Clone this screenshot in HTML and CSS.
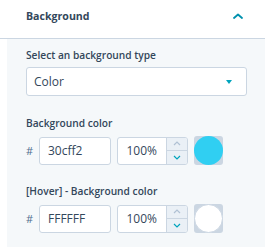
FILE: index.html
```html
<!DOCTYPE html>
<html lang="en">
<head>
    <meta charset="UTF-8">
    <meta name="viewport" content="width=device-width, initial-scale=1.0">
    <title>Background settings</title>
    <link rel="stylesheet" href="styles.css">
</head>
<body>
<div class="header">
    <span class="title">Background</span>
    <svg class="toggle" width="10" height="6" viewBox="0 0 10 6"><path d="M1 5 L5 1.5 L9 5" fill="none" stroke="#0091ae" stroke-width="1.8" stroke-linecap="round" stroke-linejoin="round"/></svg>
</div>
<div class="panel">
    <div class="field">
        <label>Select an background type</label>
        <div class="select">
            <span>Color</span>
            <span class="caret"></span>
        </div>
    </div>

    <div class="field">
        <label>Background color</label>
        <div class="color-row">
            <span class="hash">#</span>
            <input class="hex" type="text" value="30cff2" readonly>
            <div class="opacity">
                <input type="text" value="100%" readonly>
                <div class="stepper">
                    <span class="step"><svg width="8" height="5" viewBox="0 0 8 5"><path d="M1 4 L4 1 L7 4" fill="none" stroke="#b0c1d4" stroke-width="1.2"/></svg></span>
                    <span class="step"><svg width="8" height="5" viewBox="0 0 8 5"><path d="M1 1 L4 4 L7 1" fill="none" stroke="#00a4bd" stroke-width="1.2"/></svg></span>
                </div>
            </div>
            <div class="swatch"><span class="dot" style="background: #30cff2;"></span></div>
        </div>
    </div>

    <div class="field">
        <label>[Hover] - Background color</label>
        <div class="color-row">
            <span class="hash">#</span>
            <input class="hex" type="text" value="FFFFFF" readonly>
            <div class="opacity">
                <input type="text" value="100%" readonly>
                <div class="stepper">
                    <span class="step"><svg width="8" height="5" viewBox="0 0 8 5"><path d="M1 4 L4 1 L7 4" fill="none" stroke="#b0c1d4" stroke-width="1.2"/></svg></span>
                    <span class="step"><svg width="8" height="5" viewBox="0 0 8 5"><path d="M1 1 L4 4 L7 1" fill="none" stroke="#00a4bd" stroke-width="1.2"/></svg></span>
                </div>
            </div>
            <div class="swatch"><span class="dot white" style="background: #ffffff;"></span></div>
        </div>
    </div>
</div>
</body>
</html>
```

FILE: styles.css
```css
body {
    margin: 0;
    font-family: "Open Sans", "Lato", sans-serif;
    color: #33475b;
    background: #ffffff;
}
.header {
    height: 32px;
    display: flex;
    align-items: center;
    justify-content: space-between;
    padding: 0 22px 6px 26px;
    border-bottom: 1px solid #cbd6e2;
}
.title {
    font-size: 10.6px;
    font-weight: 700;
}
.toggle {
    display: block;
}
.panel {
    margin-left: 7px;
    margin-bottom: 1px;
    background: #f5f8fa;
    padding: 8px 18px 15px 19px;
}
.field {
    margin-bottom: 18px;
}
.field:first-child {
    margin-bottom: 19px;
}
.field:last-child {
    margin-bottom: 0;
}
label {
    display: block;
    font-size: 10.2px;
    font-weight: 600;
    line-height: 16px;
    margin-bottom: 4px;
}
.select {
    height: 27px;
    background: #ffffff;
    border: 1px solid #cbd6e2;
    border-radius: 3px;
    display: flex;
    align-items: center;
    justify-content: space-between;
    padding: 0 14px 0 7px;
    font-size: 12px;
}
.caret {
    width: 0;
    height: 0;
    border-left: 3px solid transparent;
    border-right: 3px solid transparent;
    border-top: 4px solid #00a4bd;
}
.color-row {
    display: flex;
    align-items: center;
    margin-top: 5px;
}
.hash {
    width: 13px;
    font-size: 11px;
    color: #516f90;
}
input {
    font-family: inherit;
    font-size: 12px;
    color: #33475b;
    border: none;
    outline: none;
    background: transparent;
    padding: 0;
}
.hex {
    box-sizing: border-box;
    width: 72px;
    height: 28px;
    background: #ffffff;
    border: 1px solid #cbd6e2;
    border-radius: 3px;
    padding-left: 8px;
}
.opacity {
    box-sizing: border-box;
    display: flex;
    width: 71px;
    height: 28px;
    margin-left: 6px;
    background: #ffffff;
    border: 1px solid #cbd6e2;
    border-radius: 3px;
    overflow: hidden;
}
.opacity input {
    width: 48px;
    text-align: right;
    padding-right: 9px;
    box-sizing: border-box;
}
.stepper {
    flex: 1;
    display: flex;
    flex-direction: column;
    border-left: 1px solid #cbd6e2;
    background: #eaf0f6;
}
.step {
    flex: 1;
    display: flex;
    align-items: center;
    justify-content: center;
}
.step + .step {
    border-top: 1px solid #cbd6e2;
}
.step svg {
    display: block;
}
.swatch {
    width: 29px;
    height: 29px;
    margin-left: 6px;
    background: #cbd6e2;
    border-radius: 3px;
    position: relative;
}
.dot {
    position: absolute;
    inset: 0;
    border-radius: 50%;
    box-sizing: border-box;
}
.dot.white {
    border: 1px solid #cbd6e2;
}
```
